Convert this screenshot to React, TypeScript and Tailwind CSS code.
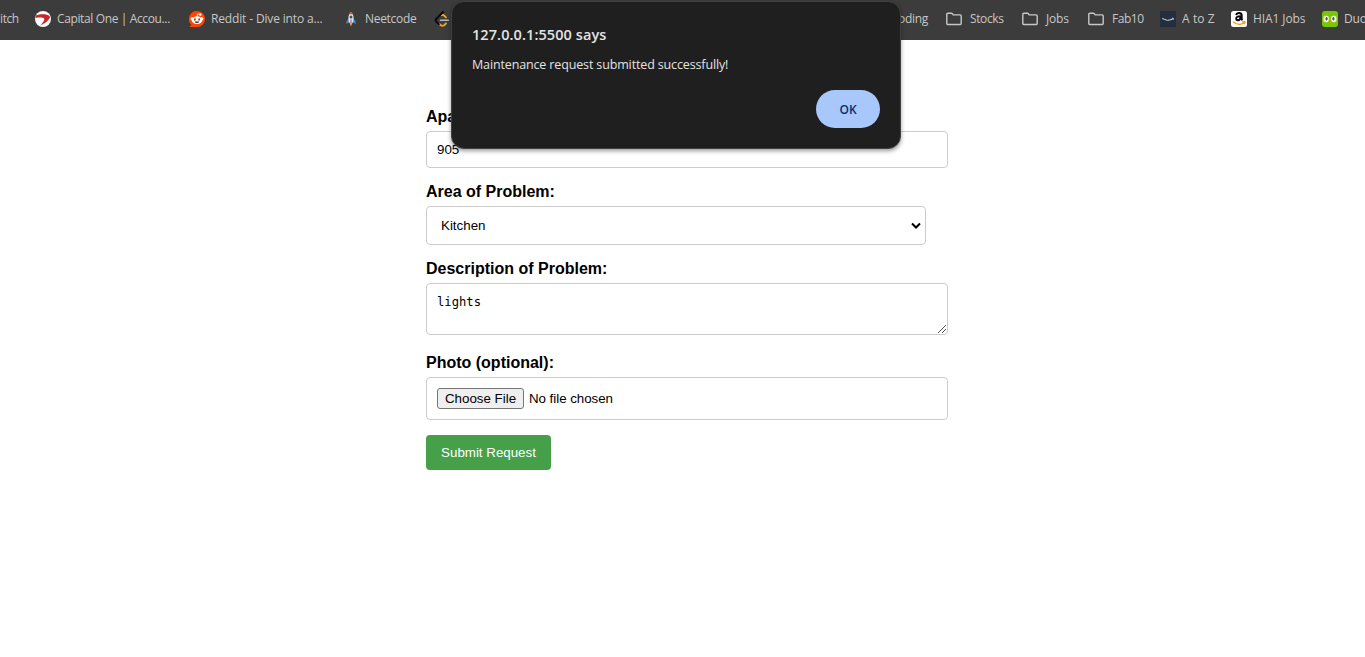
import type { ReactNode } from 'react';

const uiFont = "font-['Open_Sans','Noto_Sans',sans-serif]";

function Bookmark({ icon, label, box, text, gap = 'gap-[6px]' }: { icon: ReactNode; label: string; box: string; text: string; gap?: string }) {
  return (
    <div className={`flex shrink-0 items-center whitespace-nowrap ${gap} ${box}`}>
      <span className="h-4 w-4 shrink-0">{icon}</span>
      <span className={text}>{label}</span>
    </div>
  );
}

const Folder = () => (
  <svg width="16" height="16" viewBox="0 0 16 16" fill="none" stroke="#c7c7c7" strokeWidth="1.4" strokeLinejoin="round">
    <path d="M.8 3.2q0-1 1-1h4l1.6 1.7h6.8q1 0 1 1v7.6q0 1-1 1H1.8q-1 0-1-1z" />
  </svg>
);

const CapitalOne = () => (
  <svg width="16" height="16" viewBox="0 0 16 16">
    <circle cx="8" cy="8" r="8" fill="#fff" />
    <path d="M.7 4.500C5 2.900 12 2.800 14.500 4.900c1.900 2-2.800 6.700-9.300 9.700 2.500-2.800 4.500-5.500 4.100-6.800C8.800 6.400 4.500 6.200.5 6.900z" fill="#cc2427" />
  </svg>
);

const Reddit = () => (
  <svg width="16" height="16" viewBox="0 0 16 16">
    <path d="M8 0a8 8 0 1 1 0 16H1q-.6 0-.2-.5l1.500-1.800A8 8 0 0 1 8 0z" fill="#ff4500" />
    <path d="m8 6 .7-3.100 2.500.5" fill="none" stroke="#fff" strokeWidth=".8" />
    <circle cx="11.300" cy="3.500" r="1.200" fill="#fff" />
    <circle cx="3.200" cy="7.700" r="1.600" fill="#fff" />
    <circle cx="12.800" cy="7.700" r="1.600" fill="#fff" />
    <ellipse cx="8" cy="9.200" rx="5.200" ry="3.900" fill="#fff" />
    <ellipse cx="5.900" cy="8.500" rx="1" ry="1.200" fill="#d63c08" />
    <ellipse cx="10.100" cy="8.500" rx="1" ry="1.200" fill="#d63c08" />
    <path d="M5.700 10.600h4.600q-.5 1.500-2.300 1.500t-2.300-1.500z" fill="#22313a" />
  </svg>
);

const Rocket = () => (
  <svg width="16" height="16" viewBox="0 0 16 16">
    <path d="M5.500 7.500 3.300 10.500V13l2.500-1.500zM10.500 7.500l2.200 3V13l-2.500-1.500z" fill="#2c8ce0" />
    <path d="M8 1C5.300 3.400 4.700 7.300 5.900 11.800h4.200C11.300 7.300 10.700 3.400 8 1z" fill="#dce5eb" />
    <path d="M8 1C7.200 1.600 6.700 2.400 6.300 3.200h3.400C9.300 2.400 8.800 1.600 8 1z" fill="#e04b3b" />
    <circle cx="8" cy="6.100" r="1.500" fill="#3c5267" />
    <path d="M7.500 8.500h1v3h-1z" fill="#db3b35" />
    <path d="M6.500 11.800h3L8 15.500z" fill="#f79a28" />
  </svg>
);

const LeetCode = () => (
  <svg width="16" height="16" viewBox="0 0 16 16" fill="none" strokeWidth="1.900" strokeLinecap="round">
    <path d="m7.800 4.200q1.500-.5 2.700.7l1.400 1.400M5.200 12.700l1.600 1.600q1.700 1.200 3.300 0l1.800-1.800" stroke="#ffa116" />
    <path d="M9 1 2.300 7.800q-1.200 1.400 0 2.800l2.600 2.500" stroke="#080808" />
    <path d="M6.500 9.300h7.800" stroke="#b8b8b8" strokeWidth="1.600" />
  </svg>
);

const AToZ = () => (
  <svg width="16" height="16" viewBox="0 0 16 16">
    <path d="M0 0h16v16H0z" fill="#232f3e" />
    <path d="M2.200 7.500q5.400 3.400 10.400.8M11.800 7.300q2.200-.3 1.700.3l-.5 1.200" fill="none" stroke="#c8dbe8" strokeWidth="1" />
  </svg>
);

const Amazon = () => (
  <svg width="16" height="16" viewBox="0 0 16 16">
    <rect width="16" height="16" rx="2.500" fill="#fff" />
    <path d="M5.200 4.100Q5.700 2 8.100 2q2.600 0 2.600 2.500v3.300q0 .8.800 1.500M9.600 5.200q-4.400-.1-4.400 2.300 0 1.700 1.700 1.700 2.700 0 2.700-4" fill="none" stroke="#050505" strokeWidth="1.900" />
    <path d="M2 10.700q5.800 4.700 11.300 1.100M11.200 10.900q3-.7 2.800.1-.1 1.100-1 2" fill="none" stroke="#ff9900" strokeWidth="1.300" />
  </svg>
);

const Duolingo = () => (
  <svg width="16" height="16" viewBox="0 0 16 16">
    <rect width="16" height="16" rx="3" fill="#78c800" />
    <rect x="1.200" y="4.600" width="6" height="7" rx="3" fill="#b4e86a" />
    <rect x="8.800" y="4.600" width="6" height="7" rx="3" fill="#b4e86a" />
    <rect x="2.100" y="5" width="4.500" height="6" rx="2.200" fill="#fff" />
    <rect x="9.400" y="5" width="4.500" height="6" rx="2.200" fill="#fff" />
    <ellipse cx="4.600" cy="7.700" rx="1.100" ry="1.800" fill="#4b4b4b" />
    <ellipse cx="11.400" cy="7.700" rx="1.100" ry="1.800" fill="#4b4b4b" />
    <path d="M6.200 9.500h3.600L8 12.200z" fill="#f49000" />
  </svg>
);

function BookmarkBar() {
  return (
    <nav className={`flex h-10 items-center overflow-hidden bg-[#3c3c3c] pb-[2px] text-[12px] text-[#c7c7c7] ${uiFont}`}>
      <span className="flex w-[35px] shrink-0 whitespace-nowrap tracking-[-0.4px]">itch</span>
      <Bookmark icon={<CapitalOne />} label="Capital One | Accou..." box="w-[154px]" text="tracking-[-0.37px]" />
      <Bookmark icon={<Reddit />} label="Reddit - Dive into a..." box="w-[154px]" text="tracking-[-0.15px]" />
      <Bookmark icon={<Rocket />} label="Neetcode" box="w-[91px]" text="tracking-[-0.3px]" />
      <span className="h-4 w-4 shrink-0"><LeetCode /></span>
      <span className="w-[478px] shrink-0 text-right tracking-[-0.3px]">Coding</span>
      <div className="flex shrink-0 pl-[18px]">
        <Bookmark icon={<Folder />} label="Stocks" box="w-[76px]" text="tracking-[-0.38px]" gap="gap-2" />
        <Bookmark icon={<Folder />} label="Jobs" box="w-[66px]" text="tracking-[-0.2px]" gap="gap-2" />
        <Bookmark icon={<Folder />} label="Fab10" box="w-[72px]" text="tracking-[-0.45px]" gap="gap-2" />
        <Bookmark icon={<AToZ />} label="A to Z" box="w-[71px]" text="tracking-[0.1px]" />
        <Bookmark icon={<Amazon />} label="HIA1 Jobs" box="w-[91px]" text="tracking-[-0.1px]" />
        <Bookmark icon={<Duolingo />} label="Duolingo" box="w-[91px]" text="tracking-[-0.2px]" />
      </div>
    </nav>
  );
}

function AlertDialog() {
  return (
    <div role="alertdialog" className={`absolute left-[451px] top-px flex h-[148px] w-[450px] flex-col rounded-[13px] border border-[#414141] bg-[#1f1f1f] px-5 pt-[22px] text-[#e3e3e3] shadow-[0_2px_4px_rgba(0,0,0,0.4)] ${uiFont}`}>
      <h1 className="whitespace-nowrap text-[14.500px] font-semibold leading-[22px] tracking-[0.08px]">127.0.0.1:5500 says</h1>
      <p className="mt-[10px] whitespace-nowrap text-[12.500px] leading-[18px] tracking-[-0.14px]">Maintenance request submitted successfully!</p>
      <button className="mt-[16px] h-[38px] w-16 self-end rounded-full bg-[#a8c7fa] pt-[2px] text-[12px] font-semibold text-[#062e6f]">OK</button>
    </div>
  );
}

const label = 'mb-[5px] block h-[18px] text-base font-bold leading-[18px]';
const field = 'mb-[15px] flex w-[522px] items-center rounded border border-[#ccc] px-[10px]';

export default function App() {
  return (
    <div className="relative h-[657px] w-[1365px] overflow-hidden bg-white">
      <BookmarkBar />
      <form className="ml-[426px] flex w-[522px] flex-col pt-[68px] font-['Liberation_Sans',Arial,sans-serif] text-[13.333px] text-black">
        <span className={label}>Apartment Number:</span>
        <div className={`${field} h-[37px]`}>905</div>
        <span className={label}>Area of Problem:</span>
        <div className="mb-[15px] flex h-[39px] w-[500px] items-center justify-between rounded border border-[#ccc] pl-[14px] pr-1">
          <span>Kitchen</span>
          <svg width="10" height="8" viewBox="0 0 10 8" fill="none" stroke="#000" strokeWidth="2"><path d="m1 1.500 4 4 4-4" /></svg>
        </div>
        <span className={label}>Description of Problem:</span>
        <div className="mb-[19px] flex h-[52px] w-[522px] justify-between rounded border border-[#ccc] pl-[10px]">
          <span className="pt-[10px] font-['DejaVu_Sans_Mono',monospace] text-[12.200px] leading-4">lights</span>
          <svg className="self-end" width="10" height="10" viewBox="0 0 10 10" stroke="#555" strokeWidth="1"><path d="M1 9 9 1M5 9 9 5" /></svg>
        </div>
        <span className={label}>Photo (optional):</span>
        <div className={`${field} h-[43px] gap-[5px]`}>
          <button type="button" className="h-[21px] w-[87px] whitespace-nowrap rounded-[3px] border border-[#767676] bg-[#efefef] leading-[19px]">Choose File</button>
          <span className="tracking-[-0.04px]">No file chosen</span>
        </div>
        <button type="button" className="h-[35px] w-[125px] rounded bg-[#45a049] text-white">Submit Request</button>
      </form>
      <AlertDialog />
    </div>
  );
}
